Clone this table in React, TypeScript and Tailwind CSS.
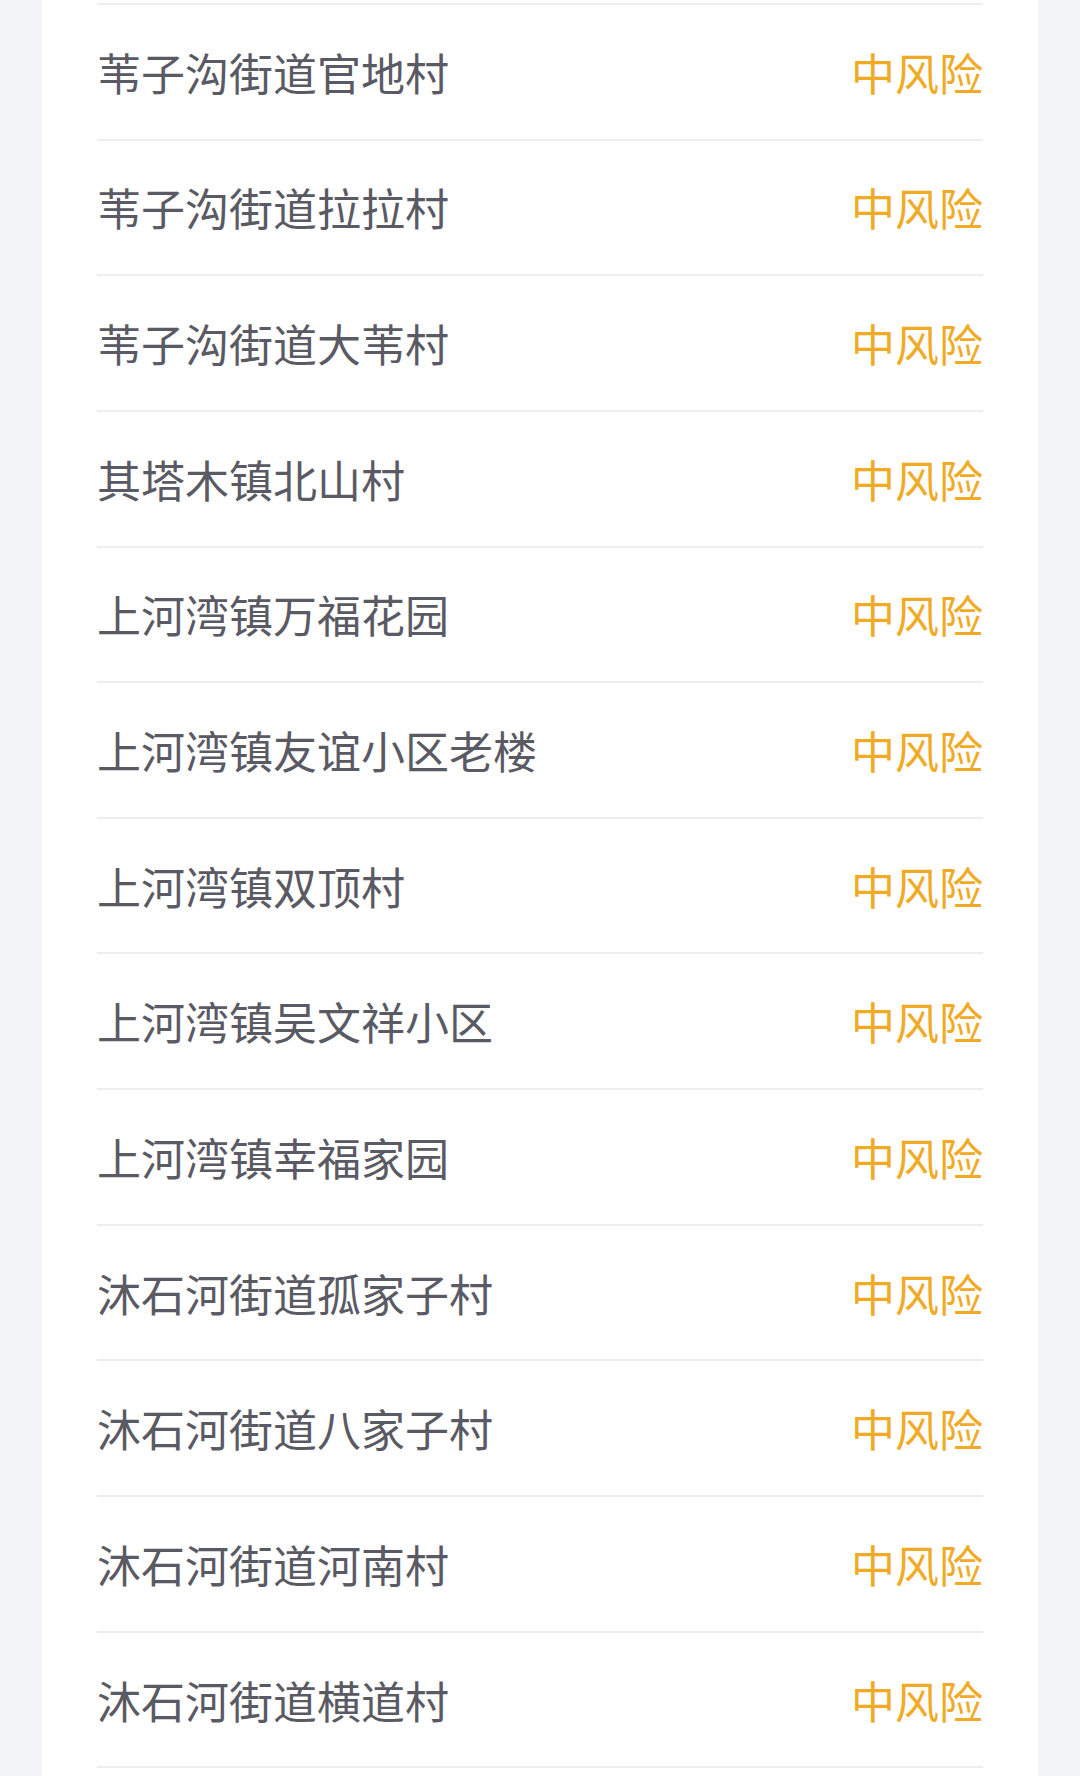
import React from "react";

const rows = [
  "苇子沟街道官地村",
  "苇子沟街道拉拉村",
  "苇子沟街道大苇村",
  "其塔木镇北山村",
  "上河湾镇万福花园",
  "上河湾镇友谊小区老楼",
  "上河湾镇双顶村",
  "上河湾镇吴文祥小区",
  "上河湾镇幸福家园",
  "沐石河街道孤家子村",
  "沐石河街道八家子村",
  "沐石河街道河南村",
  "沐石河街道横道村",
];

export default function App() {
  return (
    <div
      className="w-[1080px] h-[1776px] overflow-hidden bg-[#f3f4f7] px-[42px]"
      style={{ fontFamily: '"Noto Sans CJK SC", "Noto Sans", sans-serif' }}
    >
      <div className="h-full bg-white px-[55px] pt-[3px]">
        {rows.map((name) => (
          <div
            key={name}
            className="h-[135.65px] border-t-2 border-[#eeeef0] flex items-center justify-between"
          >
            <span className="text-[44px] leading-none text-[#5a5a64]">{name}</span>
            <span className="text-[44px] leading-none text-[#f1aa25]">中风险</span>
          </div>
        ))}
        <div className="border-t-2 border-[#eeeef0] h-[10px]" />
      </div>
    </div>
  );
}
